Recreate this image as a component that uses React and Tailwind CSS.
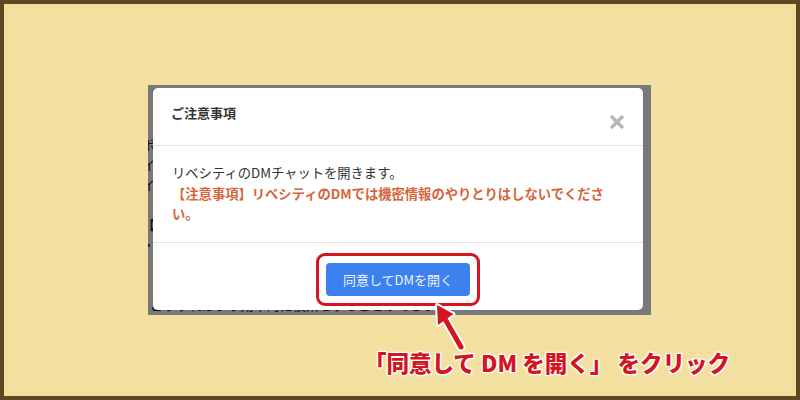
import React from "react";

const jp = { fontFamily: '"Noto Sans CJK JP", "Noto Sans", sans-serif' };

function Modal() {
  return (
    <div className="absolute left-[5px] top-[3px] w-[490px] h-[222px] bg-white rounded-[5px] flex flex-col">
      <div className="h-[58px] border-b border-[#e3e3e3] flex items-start justify-between pl-[18px] pr-[18px]">
        <p className="mt-[15px] text-[13px] font-bold text-[#333]">ご注意事項</p>
        <svg className="mt-[26px]" width="16" height="16" viewBox="0 0 16 16">
          <path d="M2 2 L14 14 M14 2 L2 14" stroke="#b5b5b5" strokeWidth="3.2" strokeLinecap="butt" />
        </svg>
      </div>
      <div className="h-[97px] border-b border-[#e3e3e3] px-[19px] pt-[17px] text-[13.3px] leading-[20.5px]">
        <p className="text-[#333]">リベシティのDMチャットを開きます。</p>
        <p className="text-[#d5653a] font-semibold">
          【注意事項】リベシティのDMでは機密情報のやりとりはしないでください。
        </p>
      </div>
      <div className="flex-1 flex items-start justify-center pt-[10px]">
        <div className="p-[7px] border-[3px] border-[#d4141f] rounded-[9px] shadow-[0_0_0_2px_#ffffff]">
          <button className="w-[144px] h-[33px] rounded-[4px] bg-[#3d80ef] text-[#eef4ff] text-[13px]">
            同意してDMを開く
          </button>
        </div>
      </div>
    </div>
  );
}

export default function App() {
  return (
    <div
      className="w-[800px] h-[400px] border-4 border-[#5e4823] bg-[#f3e0a0] relative overflow-hidden"
      style={jp}
    >
      <div className="mt-[81px] ml-[144px] w-[503px] h-[230px] relative overflow-hidden bg-white">
        <div className="-ml-[6px] pt-[50px] text-[13px] leading-[20px] text-[#222]">
          <p>ポイント</p>
          <p>イベント</p>
          <p>イベント</p>
          <p className="mt-[20px]">【注意】</p>
          <p>・</p>
          <p className="mt-[40px] pl-[8px]">こうすればより効率的に検索をすることができます。</p>
        </div>
        <div className="absolute inset-0 bg-black/[0.53]" />
        <Modal />
      </div>

      <svg className="absolute left-[421px] top-[294px]" width="50" height="60" viewBox="0 0 50 60">
        <path d="M20 21 L36 49" stroke="#ffffff" strokeWidth="9" strokeLinecap="round" />
        <polygon points="12,7 28.5,16 13,27" fill="#ffffff" stroke="#ffffff" strokeWidth="4" strokeLinejoin="round" />
        <path d="M20 21 L36 49" stroke="#d4141f" strokeWidth="5" strokeLinecap="round" />
        <polygon points="12,7 28.5,16 13,27" fill="#d4141f" />
      </svg>

      <p className="mt-[33px] ml-[360px] text-[22.5px] leading-[28px] font-black text-[#d4141f] whitespace-nowrap [text-shadow:0_0_3px_#fff,0_0_3px_#fff,0_0_2px_#fff,1px_1px_0_#fff,-1px_-1px_0_#fff,1px_-1px_0_#fff,-1px_1px_0_#fff]">
        「同意して DM を開く」 をクリック
      </p>
    </div>
  );
}
